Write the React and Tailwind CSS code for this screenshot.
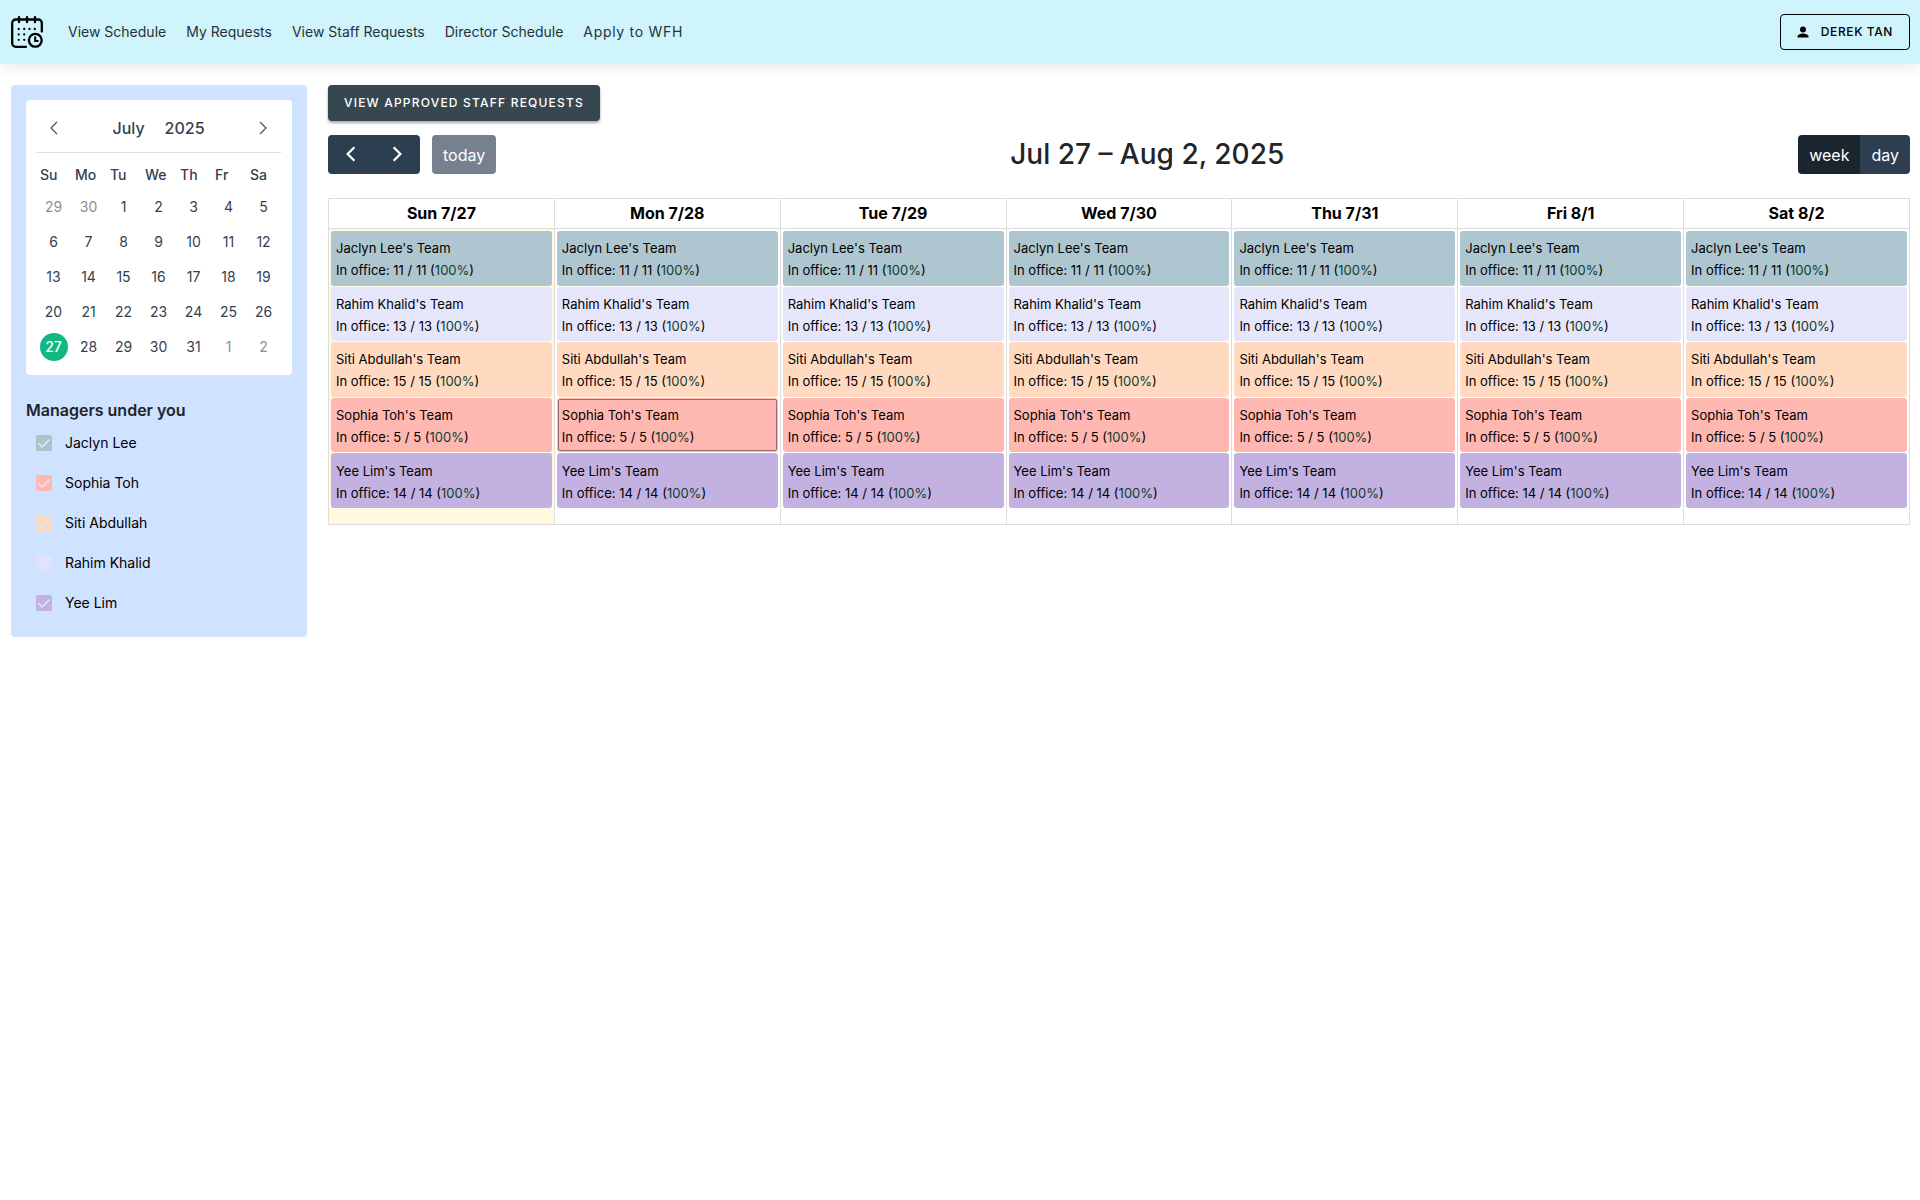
import React, { useState } from "react";

const DAYS = ["Sun 7/27", "Mon 7/28", "Tue 7/29", "Wed 7/30", "Thu 7/31", "Fri 8/1", "Sat 8/2"];

const TEAMS = [
  { name: "Jaclyn Lee", count: 11, tile: "bg-[#aec6cf]" },
  { name: "Rahim Khalid", count: 13, tile: "bg-[#e6e6fa]" },
  { name: "Siti Abdullah", count: 15, tile: "bg-[#ffdac1]" },
  { name: "Sophia Toh", count: 5, tile: "bg-[#ffb7b2]" },
  { name: "Yee Lim", count: 14, tile: "bg-[#c3b1e1]" },
];

const MANAGERS = [
  { name: "Jaclyn Lee", box: "bg-[#aac5c9]" },
  { name: "Sophia Toh", box: "bg-[#ffb7b2]" },
  { name: "Siti Abdullah", box: "bg-[#fbd9c0]" },
  { name: "Rahim Khalid", box: "bg-[#e2e0fa]" },
  { name: "Yee Lim", box: "bg-[#c3b1e1]" },
];

const WEEKS = [
  [29, 30, 1, 2, 3, 4, 5],
  [6, 7, 8, 9, 10, 11, 12],
  [13, 14, 15, 16, 17, 18, 19],
  [20, 21, 22, 23, 24, 25, 26],
  [27, 28, 29, 30, 31, 1, 2],
];

function Logo() {
  return (
    <svg viewBox="0 0 32 32" className="size-8" fill="none" stroke="#000" strokeWidth="2.3" strokeLinecap="round" aria-hidden="true">
      <path d="M15 30.800H4.700a3.500 3.500 0 0 1-3.500-3.500V7a3.500 3.500 0 0 1 3.500-3.500h22.600A3.500 3.500 0 0 1 30.800 7v8.500" />
      <path d="M8 1.200v5M16 1.200v5M24 1.200v5" />
      <circle cx="24.300" cy="24.300" r="6.400" />
      <path d="M24.200 21.300v3.600H26.800" strokeWidth="2" />
      <path d="M7.700 13h.01M13.200 13h.01M18.500 13h.01M23.800 13h.01M7.700 18.400h.01M13.200 18.400h.01M7.700 23.800h.01M13.200 23.800h.01" />
    </svg>
  );
}

function Chevron({ right, className }) {
  return (
    <svg viewBox="0 0 16 16" className={className} fill="none" stroke="currentColor" aria-hidden="true">
      <path d={right ? "M5 2l6 6-6 6" : "M11 2L5 8l6 6"} />
    </svg>
  );
}

function Header() {
  return (
    <header className="relative flex h-16 items-center justify-between bg-[#cff4fc] pr-2.5 pl-[11px] shadow-[0_3px_14px_rgba(0,0,0,0.09)]">
      <nav className="flex items-center gap-[25px] text-sm text-[#263238]">
        <a href="#home" aria-label="Home"><Logo /></a>
        <div className="flex items-center gap-5">
          <a href="#schedule">View Schedule</a>
          <a href="#my">My Requests</a>
          <a href="#staff">View Staff Requests</a>
          <a href="#director">Director Schedule</a>
          <a href="#apply" className="tracking-wider">Apply to WFH</a>
        </div>
      </nav>
      <button className="flex h-9 items-center gap-3 rounded border border-black px-4 text-xs font-medium tracking-wider text-black uppercase">
        <svg viewBox="0 0 12 12" className="size-3" aria-hidden="true">
          <circle cx="6" cy="3.500" r="3" />
          <path d="M0.500 11.500V10.500C0.500 8.500 4 7.500 6 7.500s5.500 1 5.500 3v1z" />
        </svg>
        Derek Tan
      </button>
    </header>
  );
}

function MiniCalendar() {
  return (
    <div className="rounded bg-white pr-[11px] pb-[11px] pl-2.5 text-[#333f4d]">
      <div className="flex h-[53px] items-center justify-between border-b border-[#dedede] px-2.5 pt-1">
        <button aria-label="Previous month"><Chevron className="size-4 stroke-[1.3] text-[#555]" /></button>
        <div className="flex gap-5 font-medium">
          <button>July</button>
          <button>2025</button>
        </div>
        <button aria-label="Next month"><Chevron right className="size-4 stroke-[1.3] text-[#555]" /></button>
      </div>
      <table className="w-full table-fixed text-center text-sm">
        <thead>
          <tr className="h-9 text-left">
            {["Su", "Mo", "Tu", "We", "Th", "Fr", "Sa"].map((d) => (
              <th key={d} scope="col" className="p-0 pt-2 pl-1 font-medium">{d}</th>
            ))}
          </tr>
        </thead>
        <tbody>
          {WEEKS.map((week, w) => (
            <tr key={w} className="h-[35px]">
              {week.map((d, i) => {
                const outside = (w === 0 && d > 20) || (w === 4 && d < 10);
                const selected = w === 4 && d === 27;
                return (
                  <td key={i} className="p-0">
                    <button
                      className={
                        selected
                          ? "size-7 rounded-full bg-[#10b981] font-medium text-white"
                          : outside
                            ? "size-7 text-[#8b9097]"
                            : "size-7"
                      }
                    >
                      {d}
                    </button>
                  </td>
                );
              })}
            </tr>
          ))}
        </tbody>
      </table>
    </div>
  );
}

function ManagerRow({ name, box }) {
  const [checked, setChecked] = useState(true);
  return (
    <label className="flex h-10 items-center pl-2.5 text-sm text-black">
      <span className="relative grid size-4">
        <input
          type="checkbox"
          checked={checked}
          onChange={() => setChecked(!checked)}
          className={"size-4 appearance-none rounded-xs " + box}
        />
        {checked && (
          <svg viewBox="0 0 16 16" className="pointer-events-none absolute inset-0 size-4" fill="none" stroke="#dfeaff" strokeWidth="1.500" aria-hidden="true">
            <path d="M2.500 8.500L6 12l7.500-7.500" />
          </svg>
        )}
      </span>
      <span className="ml-[13px]">{name}</span>
    </label>
  );
}

function Toolbar() {
  return (
    <div className="flex items-center justify-between">
      <div className="flex gap-3">
        <div className="flex h-[39px] overflow-hidden rounded bg-[#2c3e50] text-white">
          <button aria-label="Previous week" className="flex w-[46px] items-center justify-center pb-0.5">
            <Chevron className="size-[18px] stroke-2" />
          </button>
          <button aria-label="Next week" className="flex w-[46px] items-center justify-center pb-0.5">
            <Chevron right className="size-[18px] stroke-2" />
          </button>
        </div>
        <button className="h-[39px] rounded bg-[#76818d] px-[11px] text-white">today</button>
      </div>
      <h2 className="pb-0.5 text-[28px] leading-8 font-medium text-[#212529]">Jul 27 – Aug 2, 2025</h2>
      <div className="flex h-[39px] overflow-hidden rounded text-white">
        <button className="bg-[#1a252f] px-[11px]">week</button>
        <button className="bg-[#2c3e50] px-[11px]">day</button>
      </div>
    </div>
  );
}

function WeekTable() {
  return (
    <table className="mt-6 w-full table-fixed border-collapse text-black">
      <thead>
        <tr>
          {DAYS.map((d) => (
            <th key={d} scope="col" className="h-[30px] border border-[#ddd] p-0 pb-0.5 font-bold">{d}</th>
          ))}
        </tr>
      </thead>
      <tbody>
        <tr>
          {DAYS.map((d, i) => (
            <td key={d} className={"border border-[#ddd] p-0.5 pb-4 align-top " + (i === 0 ? "bg-[#fffadf]" : "bg-white")}>
              <div className="grid min-h-[277px] auto-rows-fr gap-px">
                {TEAMS.map((t) => (
                  <a
                    key={t.name}
                    href="#team"
                    className={
                      "flex flex-col justify-center rounded-[3px] px-[5px] pt-0.5 text-[13px] leading-[22px] " +
                      t.tile +
                      (i === 1 && t.name === "Sophia Toh" ? " outline -outline-offset-2 outline-[#a06a6a]" : "")
                    }
                  >
                    <span>{t.name}'s Team</span>
                    <span>
                      In office: {t.count} / {t.count} (<span className="text-[#0b3d2e]">100%</span>)
                    </span>
                  </a>
                ))}
              </div>
            </td>
          ))}
        </tr>
      </tbody>
    </table>
  );
}

export default function App() {
  return (
    <div className="min-h-screen bg-white font-['Inter',sans-serif]">
      <Header />
      <div className="flex items-start gap-[21px] pt-[21px] pr-2.5 pl-[11px]">
        <aside className="w-[296px] shrink-0 rounded bg-[#cfe2ff] px-[15px] pt-[15px] pb-3.5">
          <MiniCalendar />
          <h3 className="mt-[23px] leading-[25px] font-semibold text-[#212529]">Managers under you</h3>
          {MANAGERS.map((m) => (
            <ManagerRow key={m.name} {...m} />
          ))}
        </aside>
        <main className="min-w-0 flex-1">
          <button className="mb-3.5 block h-9 rounded bg-[#37474f] px-4 text-xs font-medium tracking-widest text-white uppercase shadow-[0_2px_3px_rgba(0,0,0,0.35)]">
            View Approved Staff Requests
          </button>
          <Toolbar />
          <WeekTable />
        </main>
      </div>
    </div>
  );
}
